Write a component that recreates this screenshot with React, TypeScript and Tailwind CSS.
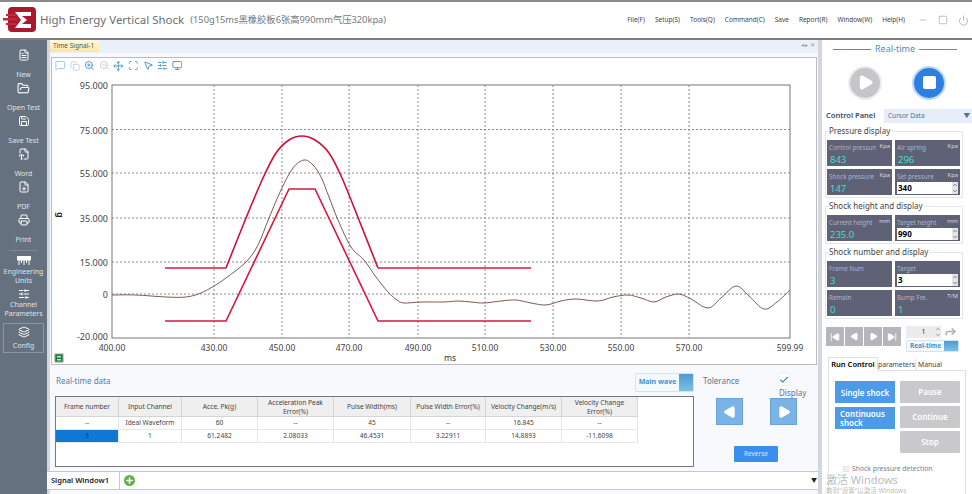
import React from "react";
import {
  FileText, FolderOpen, Save, FileType2, FileDown, Printer, SlidersHorizontal, Layers,
  MessageSquare, Copy, ZoomIn, ZoomOut, Move, Scan, MousePointer2, Monitor, Play, Square,
  SkipBack, SkipForward, Power, Minus, Plus, Check, ChevronUp, ChevronDown, Forward,
} from "lucide-react";

const font = { fontFamily: '"Noto Sans","Noto Sans CJK SC",sans-serif' };

function smooth(p: number[][]) {
  let d = `M${p[0][0]} ${p[0][1]}`;
  for (let i = 0; i < p.length - 1; i++) {
    const a = p[Math.max(i - 1, 0)], b = p[i], c = p[i + 1], e = p[Math.min(i + 2, p.length - 1)];
    const c1 = [b[0] + (c[0] - a[0]) / 6, b[1] + (c[1] - a[1]) / 6];
    const c2 = [c[0] - (e[0] - b[0]) / 6, c[1] - (e[1] - b[1]) / 6];
    d += ` C${c1[0]} ${c1[1]} ${c2[0]} ${c2[1]} ${c[0]} ${c[1]}`;
  }
  return d;
}

const brown = smooth([
  [111, 295], [135, 295], [165, 297], [185, 297], [200, 293], [213, 286], [225, 278], [245, 262], [257, 245], [268, 218],
  [280, 190], [292, 168], [303, 160], [312, 165], [320, 177], [328, 197], [337, 220], [350, 247], [363, 260], [375, 277], [387, 292],
  [396, 300], [403, 303], [420, 302], [443, 302], [457, 301], [470, 302], [483, 303], [500, 301], [515, 300], [530, 303], [545, 305],
  [560, 301], [575, 299], [597, 301], [612, 297], [627, 295], [640, 298], [653, 302], [665, 297], [678, 294], [690, 299],
  [707, 308], [720, 298], [735, 286], [748, 296], [763, 309], [776, 302], [789, 290],
]);

const red1 = smooth([
  [225, 268], [245, 218], [262, 178], [275, 153], [288, 140], [301, 136], [314, 140], [328, 153], [341, 178], [358, 220], [377, 268],
]);

const yLabels: [string, number][] = [["95.000", 85], ["75.000", 129.5], ["55.000", 173], ["35.000", 218], ["15.000", 262], ["0", 294], ["-20.000", 338]];
const xLabels: [string, number][] = [["400.00", 111], ["430.00", 213], ["450.00", 281], ["470.00", 348], ["490.00", 417], ["510.00", 484], ["530.00", 552], ["550.00", 620], ["570.00", 688], ["599.99", 789]];

function Chart() {
  return (
    <svg viewBox="51 73 764 291" className="block w-[764px] h-[291px]" style={font}>
      <rect x="111" y="85" width="678" height="253" fill="#fff" stroke="#777" strokeWidth="1" />
      {yLabels.slice(1, 6).map(([l, y]) => (
        <line key={l} x1="111" x2="789" y1={y} y2={y} stroke="#8a8a8a" strokeDasharray="2 2" />
      ))}
      {xLabels.slice(1, 9).map(([l, x]) => (
        <line key={l} y1="85" y2="338" x1={x} x2={x} stroke="#8a8a8a" strokeDasharray="2 2" />
      ))}
      {yLabels.map(([l, y]) => (
        <text key={l} x="107" y={y + (l === "-20.000" ? 2 : 4)} textAnchor="end" fontSize="9" fill="#444">{l}</text>
      ))}
      {xLabels.map(([l, x]) => (
        <text key={l} x={x} y="351" textAnchor="middle" fontSize="8.5" fill="#444">{l}</text>
      ))}
      <text x="449" y="361" textAnchor="middle" fontSize="8.5" fill="#333">ms</text>
      <text x="0" y="0" fontSize="9" fill="#222" transform="translate(56 212) rotate(90)" fontWeight="600">g</text>
      <path d="M164 268H225" fill="none" stroke="#d8173f" strokeWidth="1.6" />
      <path d={red1} fill="none" stroke="#d0103a" strokeWidth="1.6" />
      <path d="M377 268H530" fill="none" stroke="#d8173f" strokeWidth="1.6" />
      <path d="M164 321H225L288 189H314L377 321H530" fill="none" stroke="#d8173f" strokeWidth="1.6" />
      <path d={brown} fill="none" stroke="#7e5a4e" strokeWidth="1" />
      <rect x="54" y="354" width="8" height="8" fill="#1f7a3a" stroke="#8a8" />
      <rect x="56" y="356" width="4" height="1.5" fill="#bdf" />
      <rect x="56" y="359" width="4" height="1.5" fill="#bdf" />
    </svg>
  );
}

function Logo() {
  return (
    <svg width="34" height="28" viewBox="0 0 34 28" className="ml-[3px]">
      <rect x="5" y="1" width="28" height="25" rx="4" fill="#a8192e" />
      <path d="M12 6H28V10H19L24 14L19 18H28V22H12L18 14Z" fill="#fff" />
      <rect x="0" y="12" width="14" height="2.5" fill="#c8283c" />
      <rect x="3" y="8" width="10" height="2" fill="#c8283c" />
      <rect x="3" y="17" width="10" height="2" fill="#c8283c" />
    </svg>
  );
}

function RulerIcon() {
  return (
    <svg width="14" height="10" viewBox="0 0 14 10" fill="none" stroke="#fff" strokeWidth="1">
      <rect x="0.5" y="0.5" width="13" height="3.5" fill="#fff" />
      <path d="M2 4V9M4.5 4V7M7 4V9M9.5 4V7M12 4V9" />
    </svg>
  );
}

function SideItem({ icon, lines, boxed }: { icon: React.ReactNode; lines: string[]; boxed?: boolean }) {
  return (
    <div className={`flex flex-col items-center text-[7px] leading-[9px] text-[#dfe3e8] ${boxed ? "h-[30px] mx-[3px] border border-[#8b95a2] justify-between py-[2px] mt-[2px]" : lines.length > 1 ? "h-[33px]" : "h-[33px] gap-[9px]"}`}>
      <div className="h-[12px] flex items-center justify-center text-white">{icon}</div>
      <div className="text-center whitespace-nowrap">
        {lines.map((l) => <div key={l}>{l}</div>)}
      </div>
    </div>
  );
}

function Cell({ label, unit, value, input, w = "w-[65px]" }: { label: string; unit?: string; value: string; input?: boolean; w?: string }) {
  return (
    <div className={`${w} h-[26px] bg-[#5f6276] relative px-[2px] pt-[3px]`}>
      <div className="flex justify-between text-[6.3px] leading-[9px] text-[#aeb3c4] whitespace-nowrap">
        <span>{label}</span>
        {unit && <span className="text-[#d5d8e2] text-[5.8px] leading-[7px]">{unit}</span>}
      </div>
      {input ? (
        <div className="mt-[1px] bg-white h-[12px] flex items-center justify-between pl-[1px] text-[8px] font-bold text-black">
          <span>{value}</span>
          <span className="flex flex-col text-[#555] bg-[#e6e6e6] w-[6px] h-[12px] items-center justify-center">
            <ChevronUp size={6} strokeWidth={3} />
            <ChevronDown size={6} strokeWidth={3} />
          </span>
        </div>
      ) : (
        <div className="mt-[2px] pl-[1px] text-[9.5px] leading-[11px] text-[#3fdcc8]">{value}</div>
      )}
    </div>
  );
}

function Group({ title, children }: { title: string; children: React.ReactNode }) {
  return (
    <div className="relative mx-[3px] w-[138px] border border-[#e3e6ec] px-[1px] pt-[8px] pb-[2px]">
      <span className="absolute left-[3px] -top-[6px] bg-white pr-[1px] text-[8px] leading-[10px] text-[#444] whitespace-nowrap">{title}</span>
      <div className="grid grid-cols-[65px_65px] gap-x-[3px] gap-y-[3px]">{children}</div>
    </div>
  );
}

function NavBtn({ children }: { children: React.ReactNode }) {
  return <div className="w-[18px] h-[19px] bg-[#b4b6bb] flex items-center justify-center text-white">{children}</div>;
}

function GrayBtn({ label }: { label: string }) {
  return <div className="w-[60px] h-[22px] bg-[#c9c9cb] text-white text-[8px] font-semibold flex items-center justify-center rounded-[1px]">{label}</div>;
}

function BlueBtn({ children }: { children: React.ReactNode }) {
  return <div className="w-[60px] h-[22px] bg-[#4b9be8] text-white text-[8px] font-semibold leading-[9px] px-[5px] flex items-center justify-center">{children}</div>;
}

const headers = ["Frame number", "Input Channel", "Acce. Pk(g)", "Acceleration Peak Error(%)", "Pulse Width(ms)", "Pulse Width Error(%)", "Velocity Change(m/s)", "Velocity Change Error(%)"];
const row1 = ["--", "Ideal Waveform", "60", "--", "45", "--", "16.845", "--"];
const row2 = ["3", "1", "61.2482", "2.08033", "46.4531", "3.22911", "14.8893", "-11.6098"];

function DataTable() {
  return (
    <div className="w-[639px] h-[71px] border border-[#777] bg-white ml-[55px]">
      <div className="grid grid-cols-[63px_63px_76px_76px_77px_75px_76px_76px] text-[6.6px] text-[#444] text-center w-[582px]">
        {headers.map((h, i) => (
          <div key={h} className={`h-[20px] leading-[9px] bg-[#f0eff0] border-r border-b border-[#d4d4d8] flex items-center justify-center ${i === 3 || i === 7 ? "px-[6px]" : "whitespace-nowrap"}`}>{h}</div>
        ))}
        {row1.map((c, i) => (
          <div key={i} className="h-[13px] leading-[12px] border-r border-b border-[#e6e8f0] whitespace-nowrap">{c}</div>
        ))}
        {row2.map((c, i) => (
          <div key={i} className={`h-[13px] leading-[12px] border-r border-b border-[#e6e8f0] ${i === 0 ? "bg-[#0f78d4] text-[#0b3d70]" : ""}`}>{c}</div>
        ))}
      </div>
    </div>
  );
}

function Toggle({ label, w, text }: { label: string; w: string; text: string }) {
  return (
    <div className={`${w} border border-[#cfe6f5] bg-[#f4f9fd] flex items-stretch rounded-[1px]`}>
      <div className={`flex-1 ${text} font-bold text-[#3a95d8] flex items-center justify-center whitespace-nowrap`}>{label}</div>
      <div className="w-[14px] bg-gradient-to-b from-[#4d9ad2] to-[#7cc0e6]" />
    </div>
  );
}

export default function App() {
  const tools = [
    <MessageSquare key="a" size={11} className="text-[#8fc0ea]" />,
    <Copy key="b" size={10} className="text-[#c4c8cc]" />,
    <ZoomIn key="c" size={11} className="text-[#3f8fc6]" />,
    <ZoomOut key="d" size={11} className="text-[#c4c8cc]" />,
    <Move key="e" size={12} className="text-[#3f8fc6]" />,
    <Scan key="f" size={11} className="text-[#3f8fc6]" />,
    <MousePointer2 key="g" size={11} className="text-[#3f8fc6]" />,
    <SlidersHorizontal key="h" size={11} className="text-[#3f8fc6]" />,
    <Monitor key="i" size={11} className="text-[#3f8fc6]" />,
  ];
  const menus = ["File(F)", "Setup(S)", "Tools(Q)", "Command(C)", "Save", "Report(R)", "Window(W)", "Help(H)"];

  return (
    <div className="w-[972px] h-[494px] overflow-hidden flex flex-col bg-white text-[#333]" style={font}>
      {/* title bar */}
      <div className="h-[40px] shrink-0 border-t-2 border-b-2 border-t-[#8a8a8a] border-b-[#7d7d7d] bg-white flex items-center">
        <Logo />
        <span className="ml-[3px] text-[11.5px] text-[#6e6e6e] whitespace-nowrap">High Energy Vertical Shock</span>
        <span className="ml-[6px] text-[9.3px] text-[#777] whitespace-nowrap">(150g15ms黑橡胶板6张高990mm气压320kpa)</span>
        <div className="ml-auto flex gap-[10px] text-[6.5px] text-[#444] whitespace-nowrap">
          {menus.map((m) => <span key={m}>{m}</span>)}
        </div>
        <div className="ml-[13px] mr-[3px] flex items-center gap-[10px] text-[#888]">
          <Minus size={10} strokeWidth={1.2} />
          <Square size={10} strokeWidth={1.2} />
          <Power size={11} strokeWidth={1.2} />
        </div>
      </div>

      <div className="flex-1 min-h-0 flex">
        {/* sidebar */}
        <div className="w-[47px] shrink-0 bg-[#667180] pt-[9px] flex flex-col">
          <SideItem icon={<FileText size={12} />} lines={["New"]} />
          <SideItem icon={<FolderOpen size={13} />} lines={["Open Test"]} />
          <SideItem icon={<Save size={12} />} lines={["Save Test"]} />
          <SideItem icon={<FileType2 size={12} />} lines={["Word"]} />
          <SideItem icon={<FileDown size={12} />} lines={["PDF"]} />
          <SideItem icon={<Printer size={12} />} lines={["Print"]} />
          <div className="h-px bg-[#7d8794] mx-[9px] mt-[3px] mb-[4px]" />
          <SideItem icon={<RulerIcon />} lines={["Engineering", "Units"]} />
          <SideItem icon={<SlidersHorizontal size={12} />} lines={["Channel", "Parameters"]} />
          <SideItem icon={<Layers size={12} />} lines={["Config"]} boxed />
        </div>

        {/* main */}
        <div className="w-[775px] shrink-0 flex flex-col border-l-[3px] border-r-[4px] border-[#d3d6da] bg-[#f7f9fc]">
          <div className="h-[13px] bg-[#eaf1fb] flex justify-between items-start">
            <div className="w-[49px] h-[12px] bg-gradient-to-b from-[#fff9dd] to-[#fbe6a0] text-[6.5px] leading-[11px] pl-[3px] text-[#555] rounded-tr-[4px] whitespace-nowrap">Time Signal-1</div>
            <div className="mr-[3px] text-[6px] leading-[11px] text-[#999]">◂ ▸ ✕</div>
          </div>
          <div className="mx-[1px] h-[308px] mt-[4px] border border-[#b9bcc2] bg-white flex flex-col w-[766px]">
            <div className="h-[15px] flex items-center pl-[3px] gap-[4px]">
              {tools.map((t, i) => <span key={i} className="w-[10.6px] flex justify-center">{t}</span>)}
            </div>
            <Chart />
          </div>

          {/* bottom panel */}
          <div className="h-[106px] relative -ml-[50px]">
            <div className="h-[31px] pl-[56px] pt-[10px] text-[8px] text-[#5a7c9c] leading-[12px]">Real-time data</div>
            <DataTable />
            <div className="absolute left-[635px] top-[8px] h-[19px] flex"><Toggle label="Main wave" w="w-[59px]" text="text-[7px]" /></div>
            <span className="absolute left-[703px] top-[10px] text-[8px] leading-[12px] text-[#5f7485]">Tolerance</span>
            <div className="absolute left-[778px] top-[8px] w-[12px] h-[13px] bg-white border border-[#eef0f4] flex items-center justify-center">
              <Check size={14} strokeWidth={3} className="text-[#4a86c8]" />
            </div>
            <span className="absolute left-[779px] top-[22px] text-[8px] leading-[12px] text-[#5f7485]">Display</span>
            <div className="absolute left-[716px] top-[33px] w-[27px] h-[27px] bg-[#7ab4e6] border border-[#6aa3d6] flex items-center justify-center">
              <Play size={14} fill="#fff" stroke="#fff" className="rotate-180" />
            </div>
            <div className="absolute left-[770px] top-[33px] w-[27px] h-[27px] bg-[#7ab4e6] border border-[#6aa3d6] flex items-center justify-center">
              <Play size={14} fill="#fff" stroke="#fff" />
            </div>
            <div className="absolute left-[734px] top-[81px] w-[44px] h-[16px] bg-[#3b8dee] text-[6.5px] text-[#d7e8fb] flex items-center justify-center rounded-[1px]">Reverse</div>
          </div>

          {/* bottom tabs */}
          <div className="h-[19px] border-t border-b border-[#c6c8cc] bg-white flex items-center -ml-[3px]">
            <div className="w-[73px] h-full text-[7.5px] font-semibold text-[#222] flex items-center pl-[4px] border-r border-[#c6c8cc] whitespace-nowrap">Signal Window1</div>
            <div className="ml-[4px] w-[11px] h-[11px] rounded-full bg-[#62b04a] flex items-center justify-center text-white">
              <Plus size={9} strokeWidth={4} />
            </div>
            <div className="ml-auto mr-[1px] text-[6px] text-[#222]">▼</div>
          </div>
        </div>

        {/* right panel */}
        <div className="flex-1 min-w-0 relative bg-white">
          <div className="h-[14px] mt-[2px] flex items-center justify-center gap-[4px] ml-[-4px]">
            <div className="w-[38px] h-[1px] bg-[#4a8fc0]" />
            <span className="text-[9px] text-[#4a8fc0]">Real-time</span>
            <div className="w-[38px] h-[1px] bg-[#4a8fc0]" />
          </div>
          <div className="h-[53px] flex items-center pl-[26px] gap-[30px]">
            <div className="w-[34px] h-[34px] rounded-full bg-[#c6c6c8] border-2 border-[#ececee] flex items-center justify-center">
              <Play size={17} fill="#fff" stroke="#fff" />
            </div>
            <div className="w-[34px] h-[34px] rounded-full bg-[#2f7fe0] border-2 border-[#bcd8f5] flex items-center justify-center">
              <div className="w-[13px] h-[13px] bg-white rounded-[2px]" />
            </div>
          </div>
          <div className="h-[14px] flex">
            <div className="w-[62px] text-[7.5px] leading-[13px] font-semibold text-[#3a4a66] pl-[4px] whitespace-nowrap">Control Panel</div>
            <div className="flex-1 bg-[#e6eff9] text-[6.5px] leading-[14px] text-[#56708c] pl-[4px] flex justify-between pr-[2px]">
              <span>Cursor Data</span><span>▼</span>
            </div>
          </div>
          <div className="mt-[8px] flex flex-col gap-[8px]">
            <Group title="Pressure display">
              <Cell label="Control pressun" unit="Kpa" value="843" />
              <Cell label="Air spring" unit="Kpa" value="296" />
              <Cell label="Shock pressure" unit="Kpa" value="147" />
              <Cell label="Set pressure" unit="Kpa" value="340" input />
            </Group>
            <Group title="Shock height and display">
              <Cell label="Current height" unit="mm" value="235.0" />
              <Cell label="Target height" unit="mm" value="990" input />
            </Group>
            <Group title="Shock number and display">
              <Cell label="Frame Num" value="3" />
              <Cell label="Target" value="3" input />
              <Cell label="Remain" value="0" />
              <Cell label="Bump Fre." unit="T/M" value="1" />
            </Group>
          </div>
          <div className="mt-[6px] flex pl-[4px]">
            <div className="flex gap-[1px] pt-[2px]">
              <NavBtn><SkipBack size={10} fill="#fff" /></NavBtn>
              <NavBtn><Play size={9} fill="#fff" className="rotate-180" /></NavBtn>
              <NavBtn><Play size={9} fill="#fff" /></NavBtn>
              <NavBtn><SkipForward size={10} fill="#fff" /></NavBtn>
            </div>
            <div className="ml-[5px] flex flex-col gap-[2px]">
              <div className="flex items-center gap-[3px]">
                <div className="w-[35px] h-[12px] bg-[#ececee] text-[7px] leading-[12px] text-center text-[#333] relative">1
                  <span className="absolute right-0 top-0 flex flex-col text-[#555]"><ChevronUp size={6} /><ChevronDown size={6} /></span>
                </div>
                <Forward size={13} className="text-[#aab2bb]" strokeWidth={3} />
              </div>
              <div className="h-[12px] flex"><Toggle label="Real-time" w="w-[53px]" text="text-[6.5px]" /></div>
            </div>
          </div>
          <div className="mt-[5px] ml-[6px] h-[13px] flex items-end text-[6.8px] text-[#444]">
            <div className="w-[50px] h-[14px] text-[7.5px] leading-[13px] font-semibold text-black text-center border border-b-0 border-[#dcdfe4] bg-white relative z-10 -mb-px whitespace-nowrap">Run Control</div>
            <div className="w-[38px] text-center leading-[11px] border-r border-[#dcdfe4]">parameters</div>
            <div className="w-[28px] text-center leading-[11px]">Manual</div>
          </div>
          <div className="ml-[6px] w-[138px] h-[130px] border border-[#dcdfe4] pt-[10px] pl-[6px]">
            <div className="flex gap-[5px]">
              <div className="flex flex-col gap-[4px]">
                <BlueBtn>Single shock</BlueBtn>
                <BlueBtn>Continuous shock</BlueBtn>
              </div>
              <div className="flex flex-col gap-[3px]">
                <GrayBtn label="Pause" />
                <GrayBtn label="Continue" />
                <GrayBtn label="Stop" />
              </div>
            </div>
            <div className="mt-[11px] ml-[8px] flex items-center gap-[3px] text-[6.8px] leading-[9px] text-[#6f7f95] whitespace-nowrap">
              <span className="w-[6px] h-[6px] bg-[#f0f0f2] border border-[#e6e6ea]" />
              Shock pressure detection
            </div>
          </div>
          <div className="absolute left-[4px] top-[433px] text-[#a8a8a8]/80 pointer-events-none whitespace-nowrap">
            <div className="text-[11px] leading-[13px]">激活 Windows</div>
            <div className="text-[6.5px] leading-[10px]">转到"设置"以激活 Windows</div>
          </div>
        </div>
      </div>
    </div>
  );
}
